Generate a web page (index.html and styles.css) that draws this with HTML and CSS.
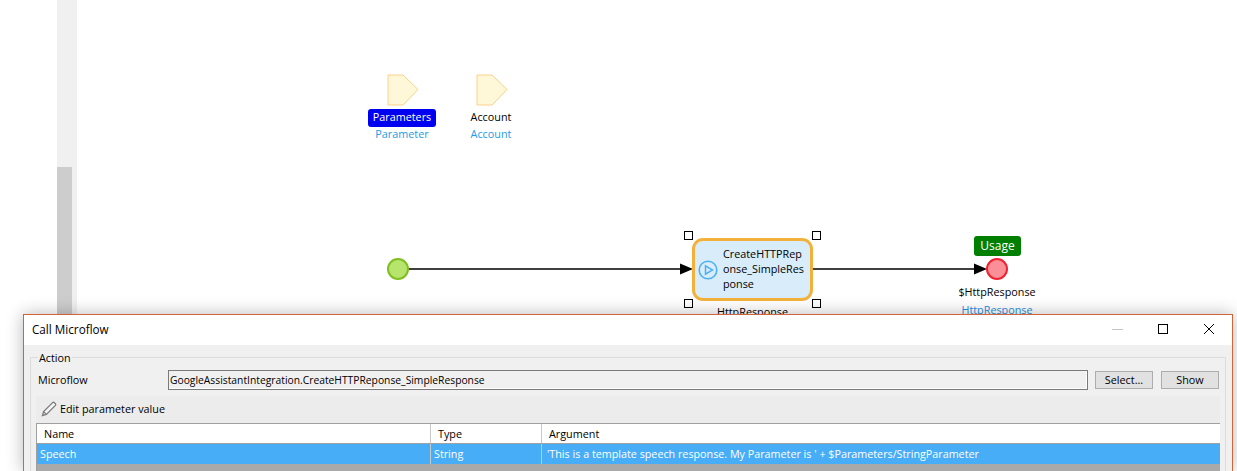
FILE: index.html
```html
<!DOCTYPE html>
<html>
  <head>
    <title>Call Microflow</title>
    <link rel="stylesheet" href="styles.css">
  </head>

  <body>
    <div class="scrollbar"><div class="scroll-thumb"></div></div>

    <div class="canvas">
      <svg class="flow-lines" width="1237" height="471">
        <line x1="408" y1="269" x2="682" y2="269" stroke="#000" stroke-width="1.3"/>
        <polygon points="680,263.5 693,269 680,274.5" fill="#000"/>
        <line x1="813" y1="269" x2="976" y2="269" stroke="#000" stroke-width="1.3"/>
        <polygon points="974,263.5 987,269 974,274.5" fill="#000"/>
        <circle cx="398" cy="269" r="10" fill="#b6e46c" stroke="#7fbf1f" stroke-width="2"/>
        <circle cx="997" cy="269" r="10" fill="#fb8f98" stroke="#ee2233" stroke-width="2"/>
      </svg>

      <div class="param param-one">
        <svg class="param-shape" width="32" height="32">
          <polygon points="1,1 16,1 31,15.5 16,31 1,31" fill="#fff8d8" stroke="#fdd08a" stroke-width="1"/>
        </svg>
        <div class="param-name selected-name">Parameters</div>
        <div class="param-type">Parameter</div>
      </div>
      <div class="param param-two">
        <svg class="param-shape" width="32" height="32">
          <polygon points="1,1 16,1 31,15.5 16,31 1,31" fill="#fff8d8" stroke="#fdd08a" stroke-width="1"/>
        </svg>
        <div class="param-name">Account</div>
        <div class="param-type">Account</div>
      </div>

      <div class="activity">
        <svg class="activity-icon" width="20" height="20">
          <circle cx="10" cy="10" r="8.8" fill="none" stroke="#4eb0f2" stroke-width="1.6"/>
          <polygon points="7.5,5.8 14.5,10 7.5,14.2" fill="none" stroke="#4eb0f2" stroke-width="1.5"/>
        </svg>
        <div class="activity-text">CreateHTTPRep<br>onse_SimpleRes<br>ponse</div>
      </div>
      <div class="handle handle-tl"></div>
      <div class="handle handle-tr"></div>
      <div class="handle handle-bl"></div>
      <div class="handle handle-br"></div>
      <div class="activity-var">HttpResponse</div>

      <div class="usage-badge">Usage</div>
      <div class="end-label">$HttpResponse</div>
      <div class="end-type">HttpResponse</div>
    </div>

    <div class="dialog">
      <div class="title-bar">
        <span class="title-text">Call Microflow</span>
        <div class="window-buttons">
          <svg width="12" height="12"><line x1="0" y1="6.5" x2="11" y2="6.5" stroke="#c4c4c4"/></svg>
          <svg width="12" height="12"><rect x="1.5" y="1.5" width="9" height="9" fill="none" stroke="#000"/></svg>
          <svg width="12" height="12"><path d="M1 1 L11 11 M11 1 L1 11" stroke="#000" fill="none"/></svg>
        </div>
      </div>
      <div class="dialog-body">
        <div class="group-box">
          <span class="group-title">Action</span>
          <div class="microflow-row">
            <label class="field-label">Microflow</label>
            <div class="field-input">GoogleAssistantIntegration.CreateHTTPReponse_SimpleResponse</div>
            <button class="btn">Select...</button>
            <button class="btn">Show</button>
          </div>
          <div class="toolbar">
            <svg width="16" height="16" viewBox="0 0 16 16">
              <path d="M1.5 14.5 L2.6 10.6 L11.6 1.6 Q12.4 0.9 13.2 1.6 L14.4 2.8 Q15.1 3.6 14.4 4.4 L5.4 13.4 Z M2.6 10.6 L5.4 13.4" fill="#f4f4f4" stroke="#7c7c7c" stroke-width="1.3"/>
            </svg>
            <span>Edit parameter value</span>
          </div>
          <div class="param-table">
            <div class="table-row table-head">
              <div class="col col-name">Name</div>
              <div class="col col-type">Type</div>
              <div class="col col-arg">Argument</div>
            </div>
            <div class="table-row table-selected">
              <div class="col col-name">Speech</div>
              <div class="col col-type">String</div>
              <div class="col col-arg">'This is a template speech response. My Parameter is ' + $Parameters/StringParameter</div>
            </div>
            <div class="table-empty"></div>
          </div>
        </div>
      </div>
    </div>
  </body>
</html>
```

FILE: styles.css
```css
html,
body
{
  margin: 0;
  height: 471px;
  overflow: hidden;
  background-color: #fff;
  font-family: "Open Sans", "Noto Sans", Arial, sans-serif;
  font-size: 10.8px;
  color: #000;
}

.scrollbar
{
  position: absolute;
  left: 57px;
  top: 0;
  width: 20px;
  height: 471px;
  background-color: #f0f0f0;
}

.scroll-thumb
{
  margin-top: 167px;
  width: 15px;
  height: 304px;
  background-color: #cdcdcd;
}

.canvas
{
  position: absolute;
  left: 0;
  top: 0;
  width: 1237px;
  height: 471px;
}

.flow-lines
{
  position: absolute;
  left: 0;
  top: 0;
}

.param
{
  position: absolute;
  top: 74px;
  width: 90px;
  display: flex;
  flex-direction: column;
  align-items: center;
}

.param-one
{
  left: 357px;
}

.param-two
{
  left: 446px;
}

.param-shape
{
  margin-bottom: 3px;
  margin-left: 1px;
}

.param-two .param-shape
{
  margin-left: 2px;
}

.param-name
{
  height: 18px;
  line-height: 16px;
  padding: 0 5px;
  border-radius: 3px;
}

.selected-name
{
  background-color: #0000f0;
  color: #fff;
}

.param-type
{
  line-height: 14px;
  color: #1b9ce6;
}

.activity
{
  position: absolute;
  left: 692px;
  top: 238px;
  width: 112px;
  height: 57px;
  display: flex;
  align-items: center;
  gap: 5px;
  padding-left: 3px;
  background-color: #d9ecf9;
  border: 3px solid #f3b13c;
  border-radius: 11px;
}

.activity-icon
{
  flex: none;
}

.activity-text
{
  line-height: 15px;
  margin-bottom: 2px;
  white-space: nowrap;
}

.handle
{
  position: absolute;
  width: 7px;
  height: 7px;
  background-color: #fff;
  border: 1px solid #000;
}

.handle-tl { left: 684px; top: 231px; }
.handle-tr { left: 812px; top: 231px; }
.handle-bl { left: 684px; top: 299px; }
.handle-br { left: 812px; top: 299px; }

.activity-var
{
  position: absolute;
  left: 692px;
  top: 304px;
  width: 121px;
  text-align: center;
  line-height: 15px;
}

.usage-badge
{
  position: absolute;
  left: 974px;
  top: 236px;
  width: 47px;
  height: 20px;
  line-height: 20px;
  text-align: center;
  font-size: 12px;
  color: #fff;
  background-color: #007f00;
  border-radius: 3px;
}

.end-label,
.end-type
{
  position: absolute;
  left: 937px;
  width: 120px;
  text-align: center;
  line-height: 15px;
}

.end-label
{
  top: 284px;
}

.end-type
{
  top: 302px;
  color: #2a8fe0;
}

.dialog
{
  position: absolute;
  left: 23px;
  top: 314px;
  width: 1208px;
  height: 156px;
  overflow: hidden;
  background-color: #f0f0f0;
  border: 1px solid #d0643a;
  border-bottom: none;
}

.canvas::after
{
  content: "";
  position: absolute;
  left: 23px;
  top: 314px;
  width: 1210px;
  height: 157px;
  box-shadow: 0 0 16px rgba(0, 0, 0, 0.28);
}

.title-bar
{
  height: 30px;
  padding-bottom: 3px;
  box-sizing: border-box;
  display: flex;
  align-items: center;
  justify-content: space-between;
  background-color: #fff;
}

.title-text
{
  margin-left: 8px;
  font-size: 11.7px;
}

.window-buttons
{
  display: flex;
  gap: 34px;
  margin-right: 17px;
}

.window-buttons svg:first-child
{
  margin-right: -1px;
}

.dialog-body
{
  padding: 12px 6px 0 6px;
}

.group-box
{
  position: relative;
  height: 114px;
  border: 1px solid #dcdcdc;
  border-bottom: none;
  padding: 12px 6px 0 6px;
}

.group-title
{
  position: absolute;
  left: 7px;
  top: -7px;
  padding: 0 1px;
  line-height: 14px;
  background-color: #f0f0f0;
}

.microflow-row
{
  display: flex;
  align-items: center;
  height: 20px;
}

.field-label
{
  width: 130px;
  margin-left: 1px;
  margin-top: -1px;
}

.field-input
{
  width: 916px;
  height: 18px;
  line-height: 18px;
  padding-left: 1px;
  padding-right: 1px;
  font-size: 10.3px;
  background-color: #f0f0f0;
  border: 1px solid #7a7a7a;
  box-shadow: inset -1px -1px 0 #fff;
  margin-right: 7px;
  white-space: nowrap;
}

.btn
{
  width: 58px;
  height: 18px;
  padding: 0;
  margin-right: 8px;
  font-family: inherit;
  font-size: 10.8px;
  line-height: 14px;
  background-color: #e1e1e1;
  border: 1px solid #adadad;
}

.btn:last-child
{
  margin-right: 0;
}

.toolbar
{
  display: flex;
  align-items: center;
  gap: 3px;
  height: 27px;
  padding-bottom: 2px;
  box-sizing: border-box;
  margin-top: 6px;
  margin-left: -1px;
  margin-right: -1px;
  padding-left: 5px;
  background-color: #ececec;
}

.param-table
{
  margin-left: -1px;
  margin-right: -1px;
  border-top: 1px solid #a0a0a0;
  border-left: 1px solid #a0a0a0;
}

.table-row
{
  display: flex;
  height: 19px;
  line-height: 19px;
}

.table-head
{
  background-color: #fff;
  border-bottom: 1px solid #a0a0a0;
}

.table-selected
{
  height: 20px;
  line-height: 20px;
  font-size: 10.75px;
  background-color: #47adf7;
  color: #fff;
}

.col
{
  box-sizing: border-box;
  padding-left: 3px;
  border-right: 1px solid #c8c8c8;
  white-space: nowrap;
}

.table-head .col
{
  padding-left: 7px;
  color: #000;
}

.col-name
{
  width: 394px;
}

.col-type
{
  width: 111px;
}

.col-arg
{
  flex: 1;
  padding-left: 5px;
  border-right: none;
}

.table-empty
{
  height: 8px;
  background-color: #a9a9a9;
}
```
